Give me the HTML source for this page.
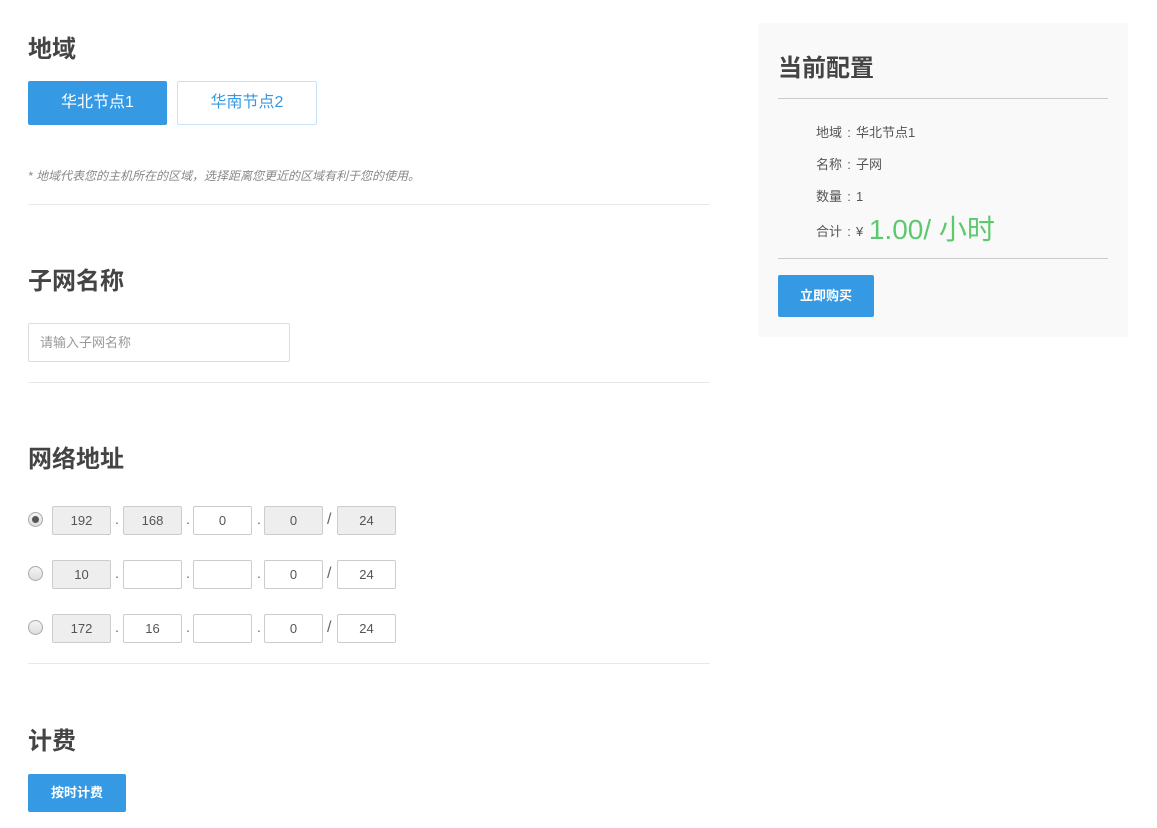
<!DOCTYPE html>
<html><head><meta charset="utf-8"><style>
*{margin:0;padding:0;box-sizing:border-box}
body{width:1157px;height:828px;background:#fff;font-family:"Liberation Sans","Noto Sans CJK SC",sans-serif;position:relative;overflow:hidden;color:#555}
.a{position:absolute}
h2{position:absolute;font-size:24px;font-weight:bold;color:#444;line-height:28px}
.hr{position:absolute;left:28px;width:682px;height:1px;background:#e8e8e8}
.btn{position:absolute;background:#3599e3;color:#fff;border-radius:2px;text-align:center}
.ip{position:absolute;width:59px;height:29px;border:1px solid #ccc;border-radius:2px;font-size:13px;color:#555;text-align:center;line-height:27px;background:#fff}
.g{background:#eee}
.dot{position:absolute;font-size:14px;color:#666}
.rd{position:absolute;left:28px;width:15px;height:15px;border-radius:50%;border:1px solid #aaa;background:linear-gradient(#f4f4f4,#ddd)}
.row{position:absolute;left:816px;font-size:13px;color:#555;white-space:nowrap}
.c{display:inline-block;width:14px;text-align:center}
</style></head><body>
<h2 style="left:28px;top:36px">地域</h2>
<div class="btn" style="left:28px;top:81px;width:139px;height:44px;line-height:44px;font-size:16px">华北节点1</div>
<div class="a" style="left:177px;top:81px;width:140px;height:44px;line-height:42px;font-size:16px;border:1px solid #c7e3f8;border-radius:2px;color:#3599e3;text-align:center">华南节点2</div>
<div class="a" style="left:28px;top:167px;font-size:12px;font-style:italic;color:#888">* 地域代表您的主机所在的区域，选择距离您更近的区域有利于您的使用。</div>
<div class="hr" style="top:204px"></div>
<h2 style="left:28px;top:268px">子网名称</h2>
<div class="a" style="left:28px;top:323px;width:262px;height:39px;border:1px solid #ddd;border-radius:2px;font-size:13px;color:#999;line-height:37px;padding-left:11px">请输入子网名称</div>
<div class="hr" style="top:382px"></div>
<h2 style="left:28px;top:446px">网络地址</h2>

<div class="rd" style="top:512px"><div class="a" style="left:3px;top:3px;width:7px;height:7px;border-radius:50%;background:#555"></div></div>
<div class="ip g" style="left:52px;top:506px">192</div><span class="dot" style="left:115px;top:511px">.</span>
<div class="ip g" style="left:123px;top:506px">168</div><span class="dot" style="left:186px;top:511px">.</span>
<div class="ip" style="left:193px;top:506px">0</div><span class="dot" style="left:257px;top:511px">.</span>
<div class="ip g" style="left:264px;top:506px">0</div><span class="dot" style="left:327px;top:511px;font-size:16px">/</span>
<div class="ip g" style="left:337px;top:506px">24</div>

<div class="rd" style="top:566px"></div>
<div class="ip g" style="left:52px;top:560px">10</div><span class="dot" style="left:115px;top:565px">.</span>
<div class="ip" style="left:123px;top:560px"></div><span class="dot" style="left:186px;top:565px">.</span>
<div class="ip" style="left:193px;top:560px"></div><span class="dot" style="left:257px;top:565px">.</span>
<div class="ip" style="left:264px;top:560px">0</div><span class="dot" style="left:327px;top:565px;font-size:16px">/</span>
<div class="ip" style="left:337px;top:560px">24</div>

<div class="rd" style="top:620px"></div>
<div class="ip g" style="left:52px;top:614px">172</div><span class="dot" style="left:115px;top:619px">.</span>
<div class="ip" style="left:123px;top:614px">16</div><span class="dot" style="left:186px;top:619px">.</span>
<div class="ip" style="left:193px;top:614px"></div><span class="dot" style="left:257px;top:619px">.</span>
<div class="ip" style="left:264px;top:614px">0</div><span class="dot" style="left:327px;top:619px;font-size:16px">/</span>
<div class="ip" style="left:337px;top:614px">24</div>

<div class="hr" style="top:663px"></div>
<h2 style="left:28px;top:728px">计费</h2>
<div class="btn" style="left:28px;top:774px;width:98px;height:38px;line-height:38px;font-size:13px;font-weight:bold">按时计费</div>

<div class="a" style="left:758px;top:23px;width:370px;height:314px;background:#f9f9f9"></div>
<h2 style="left:778px;top:55px">当前配置</h2>
<div class="a" style="left:778px;top:98px;width:330px;height:1px;background:#ccc"></div>
<div class="row" style="top:122px">地域<span class="c">:</span>华北节点1</div>
<div class="row" style="top:154px">名称<span class="c">:</span>子网</div>
<div class="row" style="top:186px">数量<span class="c">:</span>1</div>
<div class="row" style="top:208px">合计<span class="c">:</span>¥ <span style="font-size:28px;color:#5cc96e;vertical-align:-3px;margin-left:2px">1.00/ 小时</span></div>
<div class="a" style="left:778px;top:258px;width:330px;height:1px;background:#ccc"></div>
<div class="btn" style="left:778px;top:275px;width:96px;height:42px;line-height:42px;font-size:13px;font-weight:bold">立即购买</div>
</body></html>
